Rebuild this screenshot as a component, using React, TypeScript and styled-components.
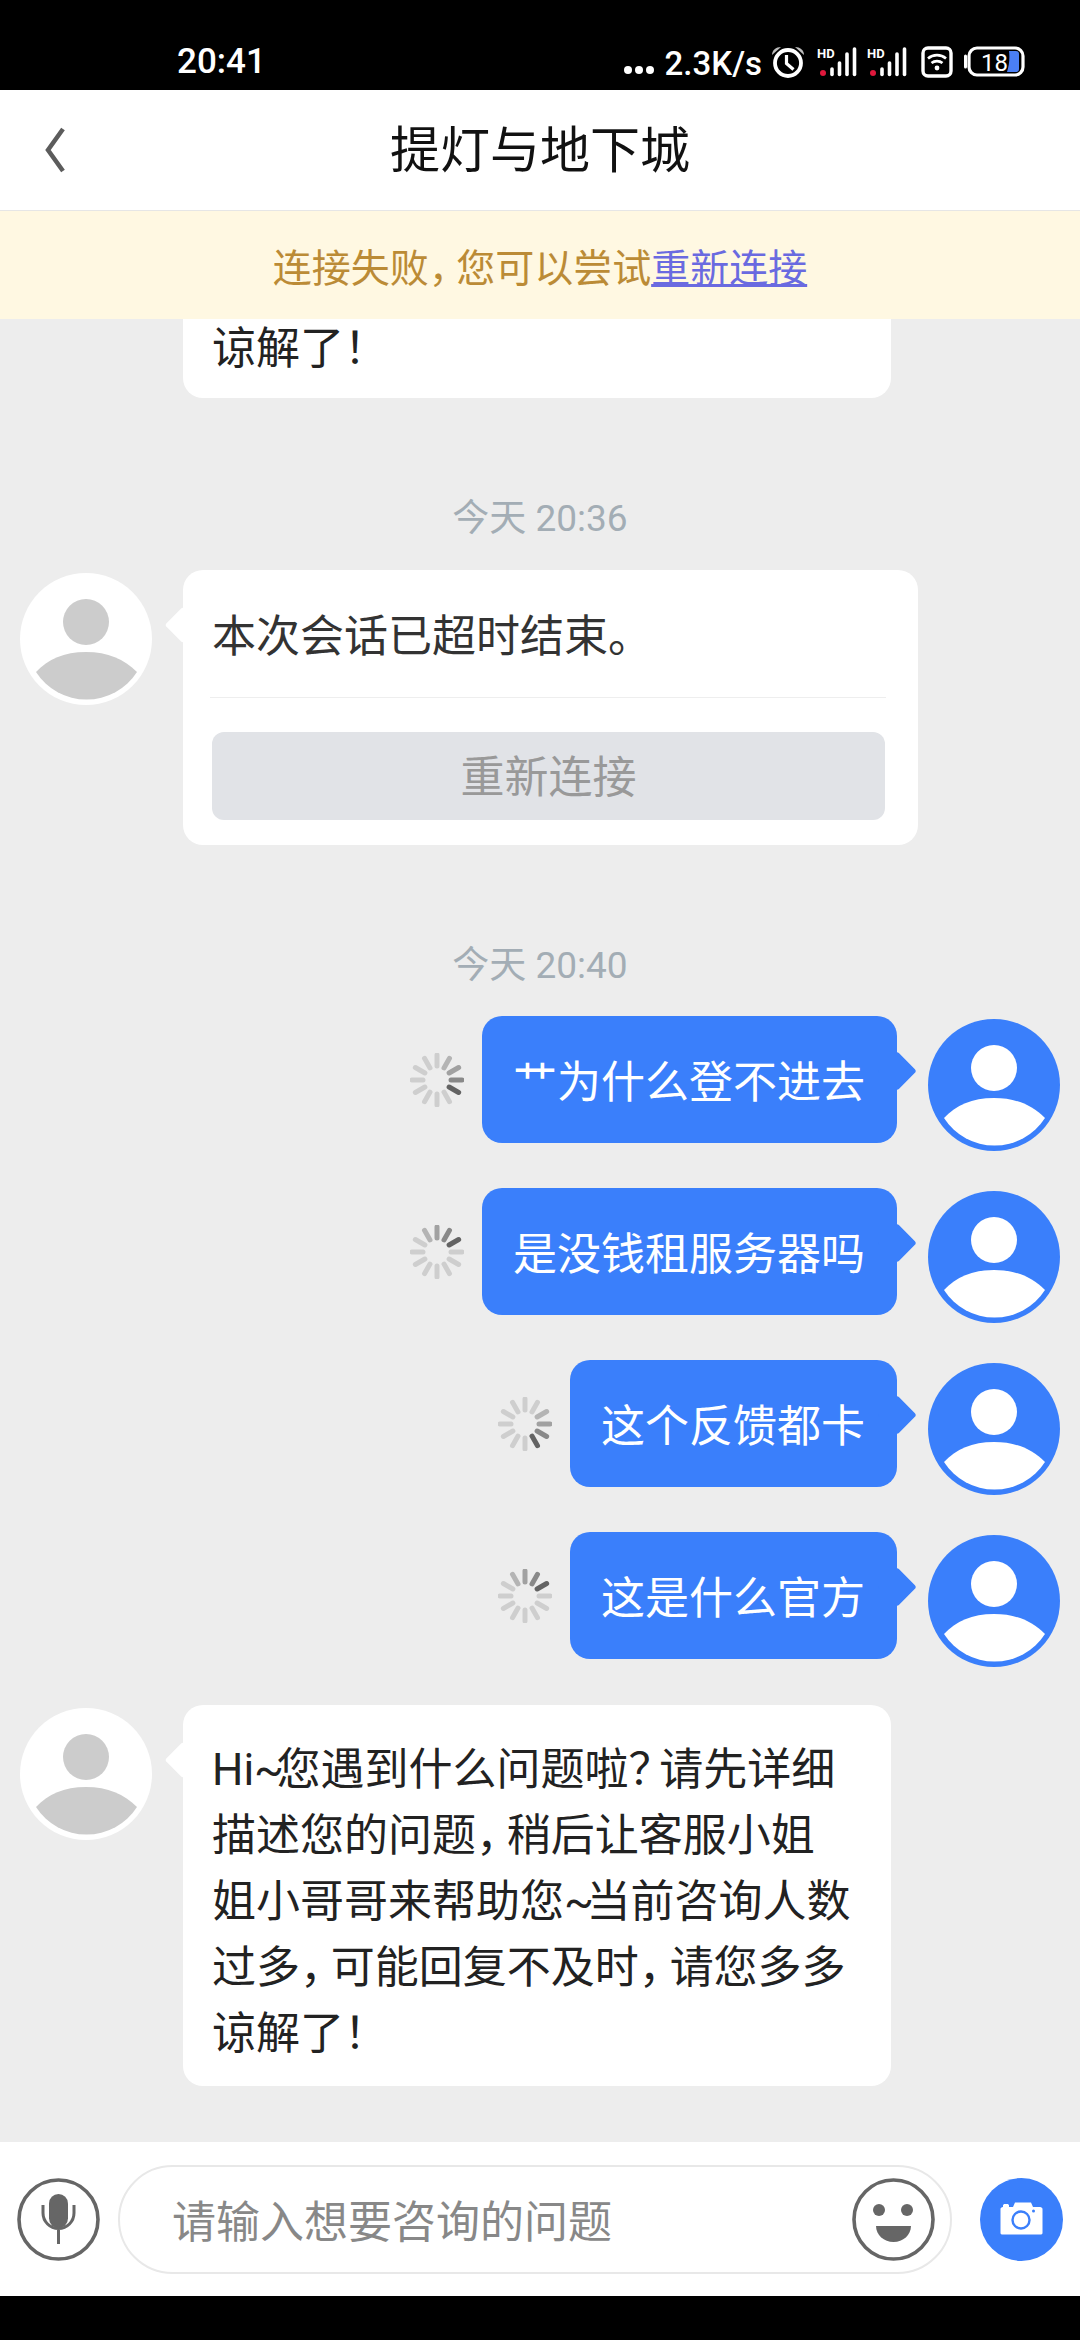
import React from "react";
import styled, { createGlobalStyle } from "styled-components";

const BLUE = "#3a7ffb";
const ICON_GRAY = "#666666";
const COMMA = "\uFF0C";
const QUESTION = "\uFF1F";
const BANG = "\uFF01";

const Global = createGlobalStyle`
  html, body { margin: 0; padding: 0; background: #000; }
  body { font-family: Roboto, "Noto Sans CJK SC", sans-serif; }
  * { box-sizing: border-box; }
`;

const Page = styled.div`
  width: 1080px;
  height: 2340px;
  display: flex;
  flex-direction: column;
  overflow: hidden;
  background: #000;
`;

const StatusBar = styled.div`
  height: 90px;
  flex: none;
  background: #000;
  color: #fff;
  display: flex;
  align-items: flex-start;
  justify-content: space-between;
  padding: 46px 55px 0 177px;
`;

const Clock = styled.span`
  font-size: 35px;
  font-weight: 500;
  line-height: 32px;
`;

const StatusIcons = styled.div`
  display: flex;
  align-items: flex-start;
`;

const Speed = styled.span`
  font-size: 33px;
  font-weight: 500;
  line-height: 36px;
  margin: 0 9px 0 10px;
`;

const StatusSvg = styled.svg<{ $gap?: number }>`
  display: block;
  flex: none;
  margin-left: ${(p) => p.$gap ?? 0}px;
`;

const Header = styled.header`
  height: 121px;
  flex: none;
  background: #fff;
  border-bottom: 1px solid #e6e6e6;
  display: flex;
  align-items: center;
  position: relative;
  justify-content: center;
  padding-top: 2px;
`;

const Back = styled.svg`
  position: absolute;
  left: 43px;
  top: 37px;
`;

const Title = styled.h1`
  margin: 0;
  font-size: 50px;
  font-weight: 400;
  color: #111;
  line-height: 60px;
`;

const Banner = styled.div`
  height: 108px;
  flex: none;
  background: #fff8e2;
  color: #bb8b36;
  font-size: 39px;
  display: flex;
  align-items: center;
  justify-content: center;
  white-space: pre;
`;

const BannerLink = styled.a`
  color: #6a6ae0;
  text-decoration: underline;
`;

const Punct = styled.span<{ $trim?: number }>`
  letter-spacing: ${(p) => p.$trim ?? -0.3}em;
`;

const Chat = styled.main`
  flex: 1;
  min-height: 0;
  background: #ededed;
  display: flex;
  flex-direction: column;
  overflow: hidden;
`;

const StubCard = styled.div`
  margin-left: 183px;
  width: 708px;
  height: 79px;
  flex: none;
  background: #fff;
  border-radius: 0 0 20px 20px;
  padding-left: 29px;
  font-size: 44px;
  line-height: 61px;
  color: #222;
`;

const TimeLabel = styled.div`
  margin-top: 100px;
  height: 40px;
  line-height: 42px;
  text-align: center;
  font-size: 37px;
  color: #a3adb5;
  flex: none;
`;

const Row = styled.div<{ $out?: boolean; $top: number }>`
  display: flex;
  flex: none;
  gap: 31px;
  align-items: flex-start;
  justify-content: ${(p) => (p.$out ? "flex-end" : "flex-start")};
  padding: 0 20px;
  margin-top: ${(p) => p.$top}px;
`;

const AvatarWrap = styled.svg`
  display: block;
  flex: none;
  margin-top: 3px;
`;

const Card = styled.div<{ $w: number }>`
  position: relative;
  flex: none;
  width: ${(p) => p.$w}px;
  background: #fff;
  border-radius: 20px;
  font-size: 44px;
  line-height: 66px;
  color: #222;
  &::before {
    content: "";
    position: absolute;
    left: -13px;
    top: 42px;
    width: 26px;
    height: 26px;
    background: #fff;
    border-radius: 3px;
    transform: rotate(45deg);
  }
`;

const CardText = styled.div`
  padding: 32px 0 19px 29px;
  white-space: pre;
`;

const NoticeText = styled.div`
  padding: 34px 0 27px 2px;
  margin: 0 32px 0 27px;
  color: #333;
  border-bottom: 1px solid #eeeeee;
`;

const CardButton = styled.div`
  margin: 34px 33px 25px 29px;
  height: 88px;
  padding-top: 3px;
  border-radius: 12px;
  background: #e1e3e7;
  color: #999;
  display: flex;
  align-items: center;
  justify-content: center;
`;

const OutGroup = styled.div`
  display: flex;
  align-items: center;
  gap: 18px;
`;

const Bubble = styled.div`
  position: relative;
  height: 127px;
  padding: 34px 32px 27px 31px;
  background: ${BLUE};
  color: #fff;
  border-radius: 20px;
  font-size: 44px;
  line-height: 66px;
  white-space: pre;
  &::after {
    content: "";
    position: absolute;
    right: -14px;
    top: 41px;
    width: 28px;
    height: 28px;
    background: ${BLUE};
    border-radius: 3px;
    transform: rotate(45deg);
  }
`;

const InputBar = styled.footer`
  height: 154px;
  flex: none;
  background: #fff;
  display: flex;
  align-items: center;
  padding: 0 17px;
`;

const RoundIcon = styled.svg`
  display: block;
  flex: none;
`;

const Pill = styled.div`
  width: 834px;
  height: 109px;
  margin: 0 28px 0 18px;
  flex: none;
  border: 2px solid #e8e8e8;
  border-radius: 55px;
  display: flex;
  align-items: center;
  justify-content: space-between;
  padding: 0 15px 0 52px;
`;

const Placeholder = styled.span`
  font-size: 44px;
  color: #888;
`;

const BottomInset = styled.div`
  height: 44px;
  flex: none;
  background: #000;
`;

const SpinnerSvg = styled.svg`
  display: block;
  flex: none;
`;

const Avatar = ({ out }: { out?: boolean }) => {
  const bg = out ? BLUE : "#ffffff";
  const fg = out ? "#ffffff" : "#cccccc";
  return (
    <AvatarWrap width="132" height="132" viewBox="0 0 132 132">
      <circle cx="66" cy="66" r="66" fill={bg} />
      <circle cx="66" cy="49" r="23" fill={fg} />
      <path d="M16 99C28 86 44 79 66 79C88 79 104 86 117 99A60 60 0 0 1 16 99Z" fill={fg} />
    </AvatarWrap>
  );
};

const Spinner = ({ head }: { head: number }) => {
  const shades = [0.58, 0.42, 0.32, 0.24];
  return (
    <SpinnerSvg width="54" height="54" viewBox="-27 -27 54 54">
      {Array.from({ length: 12 }, (_, i) => {
        const back = (head - i + 12) % 12;
        const o = back < 4 ? shades[back] : 0.13;
        return (
          <line
            key={i}
            x1="0"
            y1="-14"
            x2="0"
            y2="-25"
            stroke="#000"
            strokeOpacity={o}
            strokeWidth="5"
            strokeLinecap="round"
            transform={`rotate(${i * 30})`}
          />
        );
      })}
    </SpinnerSvg>
  );
};

const Signal = ({ gap }: { gap: number }) => (
  <StatusSvg $gap={gap} width="40" height="32" viewBox="0 0 40 32">
    <text x="0" y="12" fontSize="13" fontWeight="700" fill="#fff" fontFamily="Roboto, sans-serif">HD</text>
    <circle cx="6" cy="27" r="3" fill="#e0183c" />
    <g stroke="#fff" strokeWidth="3.6" strokeLinecap="round">
      <line x1="15" y1="23" x2="15" y2="28.5" />
      <line x1="22.5" y1="17" x2="22.5" y2="28.5" />
      <line x1="30" y1="8" x2="30" y2="28.5" />
      <line x1="37.5" y1="3" x2="37.5" y2="28.5" />
    </g>
  </StatusSvg>
);

const Outgoing = ({ text, top, head }: { text: string; top: number; head: number }) => (
  <Row $out $top={top}>
    <OutGroup>
      <Spinner head={head} />
      <Bubble>{text}</Bubble>
    </OutGroup>
    <Avatar out />
  </Row>
);

export default function App() {
  return (
    <Page>
      <Global />
      <StatusBar>
        <Clock>20:41</Clock>
        <StatusIcons>
          <StatusSvg width="32" height="32" viewBox="0 0 32 32">
            <circle cx="5" cy="24" r="4" fill="#fff" />
            <circle cx="16" cy="24" r="4" fill="#fff" />
            <circle cx="27" cy="24" r="4" fill="#fff" />
          </StatusSvg>
          <Speed>2.3K/s</Speed>
          <StatusSvg width="34" height="32" viewBox="0 0 34 32">
            <path d="M1 9C1 4 5 1 10 1Z" fill="#bdbdbd" />
            <path d="M33 9C33 4 29 1 24 1Z" fill="#bdbdbd" />
            <circle cx="17" cy="17" r="13" fill="none" stroke="#fff" strokeWidth="3.8" />
            <path d="M15.5 9V17.5L22.5 23.5" fill="none" stroke="#fff" strokeWidth="3.2" />
          </StatusSvg>
          <Signal gap={12} />
          <Signal gap={10} />
          <StatusSvg $gap={14} width="32" height="32" viewBox="0 0 32 32">
            <rect x="2" y="2" width="28" height="28" rx="5" fill="none" stroke="#fff" strokeWidth="3.4" />
            <path d="M7 12.5C12 8 20 8 25 12.5" fill="none" stroke="#fff" strokeWidth="2.6" />
            <path d="M10.5 17C13.5 14.5 18.5 14.5 21.5 17" fill="none" stroke="#fff" strokeWidth="2.6" />
            <circle cx="16" cy="22" r="2.4" fill="#fff" />
          </StatusSvg>
          <StatusSvg $gap={11} width="61" height="32" viewBox="0 0 61 32">
            <rect x="5" y="2" width="54" height="27" rx="8" fill="none" stroke="#fff" strokeWidth="3.2" />
            <path d="M1.5 10V21" stroke="#fff" strokeWidth="3" strokeLinecap="round" />
            <path d="M45 5H52C54 5 55 6 55 8V23C55 25 54 26 52 26H43C45 20 46 12 45 5Z" fill="#4a7ff5" />
            <text x="17" y="25" fontSize="24" fontWeight="400" fill="#fff" fontFamily="Roboto, sans-serif">18</text>
          </StatusSvg>
        </StatusIcons>
      </StatusBar>

      <Header>
        <Back width="24" height="46" viewBox="0 0 24 46">
          <path d="M20 2L5 23L20 44" fill="none" stroke="#5c5c5c" strokeWidth="4.5" />
        </Back>
        <Title>提灯与地下城</Title>
      </Header>

      <Banner>
        连接失败<Punct>{COMMA}</Punct>您可以尝试<BannerLink>重新连接</BannerLink>
      </Banner>

      <Chat>
        <StubCard>谅解了{BANG}</StubCard>

        <TimeLabel>今天 20:36</TimeLabel>
        <Row $top={32}>
          <Avatar />
          <Card $w={735}>
            <NoticeText>本次会话已超时结束。</NoticeText>
            <CardButton>重新连接</CardButton>
          </Card>
        </Row>

        <TimeLabel>今天 20:40</TimeLabel>
        <Outgoing top={31} text="艹为什么登不进去" head={4} />
        <Outgoing top={37} text="是没钱租服务器吗" head={2} />
        <Outgoing top={37} text="这个反馈都卡" head={5} />
        <Outgoing top={37} text="这是什么官方" head={2} />

        <Row $top={38}>
          <Avatar />
          <Card $w={708}>
            <CardText>
              Hi<Punct $trim={-0.17}>~</Punct>您遇到什么问题啦<Punct>{QUESTION}</Punct>请先详细
              {"\n"}描述您的问题<Punct>{COMMA}</Punct>稍后让客服小姐
              {"\n"}姐小哥哥来帮助您<Punct $trim={-0.17}>~</Punct>当前咨询人数
              {"\n"}过多<Punct>{COMMA}</Punct>可能回复不及时<Punct>{COMMA}</Punct>请您多多
              {"\n"}谅解了{BANG}
            </CardText>
          </Card>
        </Row>
      </Chat>

      <InputBar>
        <RoundIcon width="83" height="83" viewBox="0 0 83 83">
          <circle cx="41.5" cy="41.5" r="39.5" fill="none" stroke={ICON_GRAY} strokeWidth="3.6" />
          <rect x="32" y="16" width="19" height="34" rx="9.5" fill={ICON_GRAY} />
          <path d="M26 27V35A15.5 15.5 0 0 0 57 35V27M41.5 50V66" fill="none" stroke={ICON_GRAY} strokeWidth="3" />
        </RoundIcon>
        <Pill>
          <Placeholder>请输入想要咨询的问题</Placeholder>
          <RoundIcon width="83" height="83" viewBox="0 0 83 83">
            <circle cx="41.5" cy="41.5" r="39.5" fill="none" stroke={ICON_GRAY} strokeWidth="3.6" />
            <circle cx="27" cy="32" r="6" fill={ICON_GRAY} />
            <circle cx="55" cy="32" r="6" fill={ICON_GRAY} />
            <path d="M24 48H59C59 57 51 64 41.5 64C32 64 24 57 24 48Z" fill={ICON_GRAY} />
          </RoundIcon>
        </Pill>
        <RoundIcon width="83" height="83" viewBox="0 0 83 83">
          <circle cx="41.5" cy="41.5" r="41.5" fill={BLUE} />
          <path d="M23 29V27.5C23 26.5 24 26 25 26H27C28 26 29 26.5 29 27.5V29H33L35 24.5H51L53 29H60C61.5 29 62.5 30 62.5 31V55C62.5 56 61.5 56.5 60 56.5H23C21.5 56.5 20.5 56 20.5 55V31C20.5 30 21.5 29 23 29Z" fill="#fff" />
          <circle cx="41" cy="42" r="8.5" fill="none" stroke={BLUE} strokeWidth="2.4" />
          <circle cx="53.5" cy="33" r="1.5" fill={BLUE} />
        </RoundIcon>
      </InputBar>
      <BottomInset />
    </Page>
  );
}
